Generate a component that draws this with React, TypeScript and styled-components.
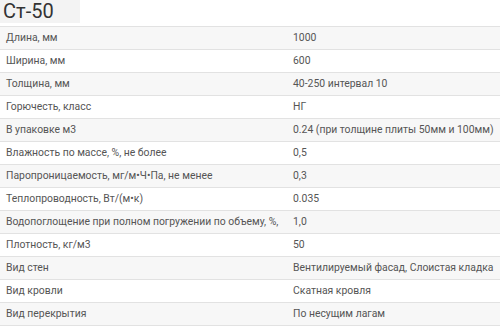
import React from "react";
import styled, { createGlobalStyle } from "styled-components";

const Global = createGlobalStyle`
  html, body {
    margin: 0;
    padding: 0;
    background: #fff;
  }
  body {
    font-family: Roboto, "Noto Sans", sans-serif;
  }
`;

const Page = styled.div`
  width: 500px;
  display: flex;
  flex-direction: column;
`;

const Title = styled.h2`
  margin: 0;
  width: 77px;
  height: 23px;
  padding-left: 3px;
  background: #f3f3f3;
  font-family: Roboto, sans-serif;
  font-weight: 400;
  font-size: 20px;
  line-height: 23px;
  color: #333;
`;

const Table = styled.table`
  margin-top: 3px;
  width: 500px;
  table-layout: fixed;
  border-collapse: collapse;
  font-family: Roboto, sans-serif;
  font-size: 10.4px;
  color: #555;
`;

const LabelCol = styled.col`
  width: 287px;
`;

const Row = styled.tr<{ $shaded: boolean }>`
  height: 23px;
  background: ${({ $shaded }) => ($shaded ? "#f7f7f7" : "#fff")};
  border-top: 1px solid #e2e2e2;
  border-bottom: 1px solid #e2e2e2;
`;

const Cell = styled.td`
  padding: 0 0 0 6px;
  white-space: nowrap;
  overflow: hidden;
  vertical-align: middle;
  line-height: 22px;
`;

const specs: [string, string][] = [
  ["Длина, мм", "1000"],
  ["Ширина, мм", "600"],
  ["Толщина, мм", "40-250 интервал 10"],
  ["Горючесть, класс", "НГ"],
  ["В упаковке м3", "0.24 (при толщине плиты 50мм и 100мм)"],
  ["Влажность по массе, %, не более", "0,5"],
  ["Паропроницаемость, мг/м•Ч•Па, не менее", "0,3"],
  ["Теплопроводность, Вт/(м•к)", "0.035"],
  ["Водопоглощение при полном погружении по объему, %,", "1,0"],
  ["Плотность, кг/м3", "50"],
  ["Вид стен", "Вентилируемый фасад, Слоистая кладка"],
  ["Вид кровли", "Скатная кровля"],
  ["Вид перекрытия", "По несущим лагам"],
];

export default function App() {
  return (
    <Page>
      <Global />
      <Title>Ст-50</Title>
      <Table>
        <colgroup>
          <LabelCol />
          <col />
        </colgroup>
        <tbody>
          {specs.map(([label, value], i) => (
            <Row key={label} $shaded={i % 2 === 0}>
              <Cell>{label}</Cell>
              <Cell>{value}</Cell>
            </Row>
          ))}
        </tbody>
      </Table>
    </Page>
  );
}
